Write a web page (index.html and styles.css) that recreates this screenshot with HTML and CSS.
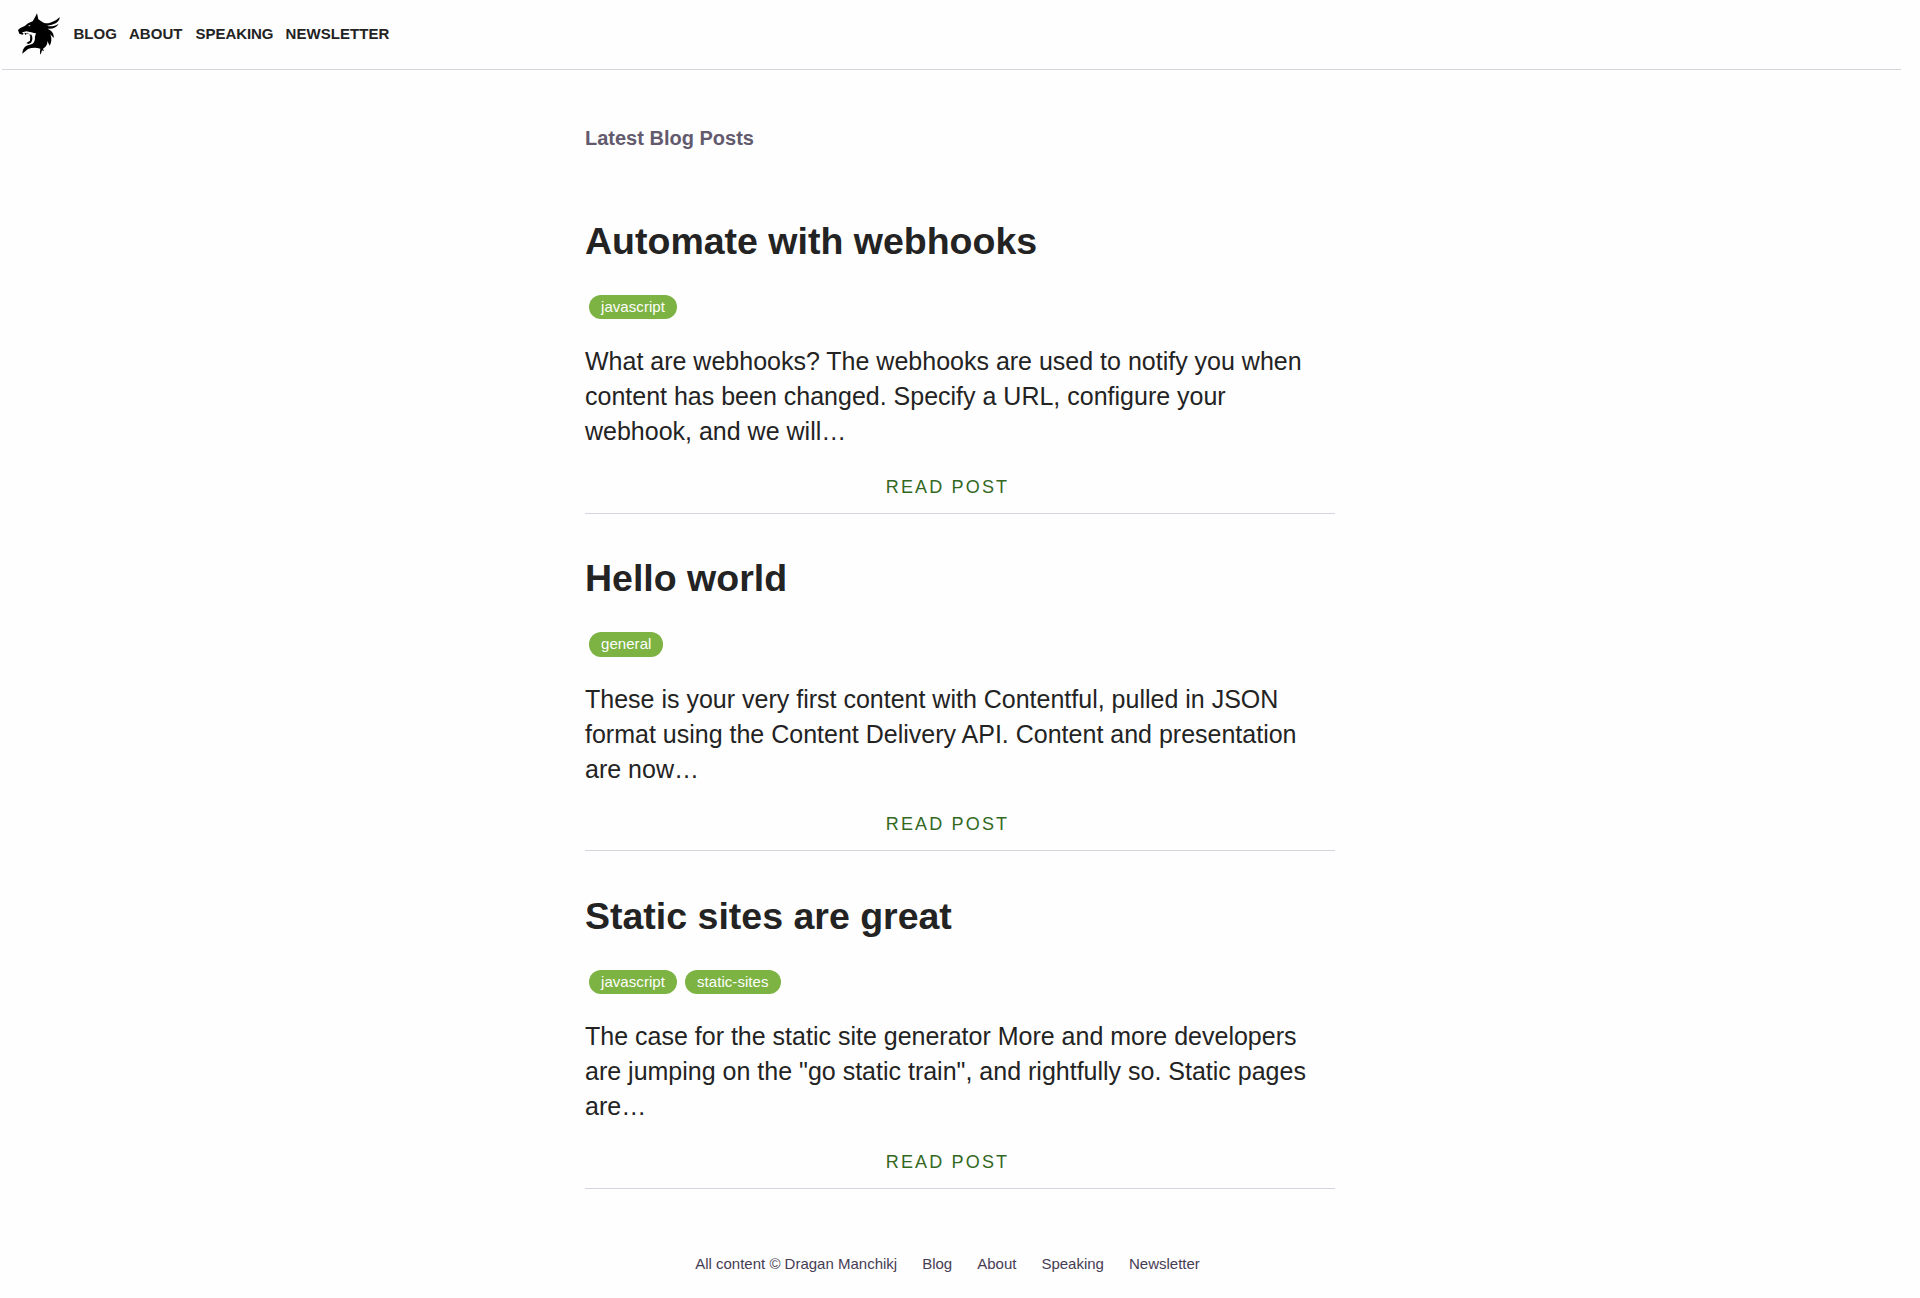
FILE: index.html
```html
<!DOCTYPE html>
<html lang="en">
<head>
<meta charset="utf-8">
<title>Blog</title>
<link rel="stylesheet" href="styles.css">
</head>
<body>
<header class="site-header">
  <a class="logo" href="#" aria-label="Home">
    <svg viewBox="0 0 150 150" width="50" height="50" aria-hidden="true">
      <path d="M12 66 L19 60 L32 54 L42 46 L56 40 L63 28 L69 16 L73 34 L84 41 C94 49 105 46 114 42 C123 39 131 34 137 27 C137 39 128 46 114 50 L99 53 C110 57 121 55 134 47 C128 59 115 64 101 62 C111 67 121 75 119 90 L109 79 C114 91 113 103 107 113 L100 99 C101 111 94 118 87 122 L90 130 L84 127 L80 140 C76 132 79 126 79 122 C66 118 53 119 42 123 L25 137 C26 121 34 112 45 111 L56 107 L66 76 L40 72 L36 79 L30 76 L26 80 L16 77 Z"/>
      <path class="logo-cut" d="M24 73 L38 70 L47 72 L58 75 C64 84 65 97 58 105 L45 109 L41 107 L49 101 L48 82 L40 80 L35 84 L31 79 Z M42 54 L49 51 L48 55 Z"/>
      <path d="M31 74 L35 82 L40 74 L46 78 L48 84 L51 79 C57 86 56 98 51 104 L43 108 L37 105 L48 98 L49 79 Z"/>
    </svg>
  </a>
  <nav class="site-nav">
    <a href="#">Blog</a>
    <a href="#">About</a>
    <a class="nav-speaking" href="#">Speaking</a>
    <a href="#">Newsletter</a>
  </nav>
</header>
<main class="content">
  <h2 class="section-title">Latest Blog Posts</h2>
  <article class="post">
    <h1 class="post-title">Automate with webhooks</h1>
    <div class="tags"><span class="tag">javascript</span></div>
    <p class="excerpt">What are webhooks? The webhooks are used to notify you when content has been changed. Specify a URL, configure your webhook, and we will…</p>
    <a class="read-post" href="#">Read post</a>
  </article>
  <article class="post">
    <h1 class="post-title">Hello world</h1>
    <div class="tags"><span class="tag">general</span></div>
    <p class="excerpt">These is your very first content with Contentful, pulled in JSON format using the Content Delivery API. Content and presentation are now…</p>
    <a class="read-post" href="#">Read post</a>
  </article>
  <article class="post">
    <h1 class="post-title">Static sites are great</h1>
    <div class="tags"><span class="tag">javascript</span><span class="tag">static-sites</span></div>
    <p class="excerpt">The case for the static site generator More and more developers are jumping on the "go static train", and rightfully so. Static pages are…</p>
    <a class="read-post" href="#">Read post</a>
  </article>
</main>
<footer class="site-footer">
  <span>All content © Dragan Manchikj</span>
  <a href="#">Blog</a>
  <a href="#">About</a>
  <a href="#">Speaking</a>
  <a href="#">Newsletter</a>
</footer>
</body>
</html>
```
FILE: styles.css
```css
* { box-sizing: border-box; }
body {
  margin: 0;
  background: #fefefe;
  color: #232323;
  font-family: "Liberation Sans", Arial, sans-serif;
}
a { color: inherit; text-decoration: none; }
.site-header {
  display: flex;
  align-items: center;
  height: 70px;
  margin: 0 19px 0 2px;
  padding: 0 0 3px 12px;
  border-bottom: 1px solid #d5d5dd;
}
.logo svg { display: block; }
.logo-cut { fill: #fefefe; }
.site-nav {
  display: flex;
  gap: 12px;
  margin-left: 9.4px;
  font-size: 15px;
  font-weight: 700;
  letter-spacing: 0.06px;
  text-transform: uppercase;
}
.nav-speaking { margin-left: 1px; letter-spacing: -0.06px; }
.content { width: 750px; margin: 0 auto; }
.section-title {
  margin: 0;
  padding-top: 56px;
  font-size: 20px;
  line-height: 24px;
  color: #635a6e;
}
.post {
  display: flex;
  flex-direction: column;
  height: 337.1px;
  border-bottom: 1px solid #d5d5dd;
}
.section-title + .post { height: 364.3px; padding-top: 26.5px; }
.post:last-child { height: 337.5px; }
.post-title {
  margin: 40.15px 0 0;
  font-size: 37.5px;
  line-height: 48px;
}
.tags {
  display: flex;
  gap: 8px;
  margin: 30px 0 0 4px;
}
.tag {
  height: 24.4px;
  padding: 0 12px;
  border-radius: 12.2px;
  background: #7cb342;
  color: #fefefe;
  font-size: 15px;
  line-height: 24.4px;
  letter-spacing: 0.06px;
}
.excerpt {
  margin: 24.9px 0 0;
  font-size: 25px;
  line-height: 35px;
}
.read-post {
  align-self: center;
  margin: 25.7px 25px 0 0;
  color: #33691e;
  font-size: 18px;
  line-height: 24px;
  letter-spacing: 2.15px;
  text-transform: uppercase;
}
.site-footer {
  display: flex;
  justify-content: center;
  gap: 25px;
  padding: 65px 25px 0 0;
  color: #463d54;
  font-size: 15px;
  line-height: 20px;
}
```
